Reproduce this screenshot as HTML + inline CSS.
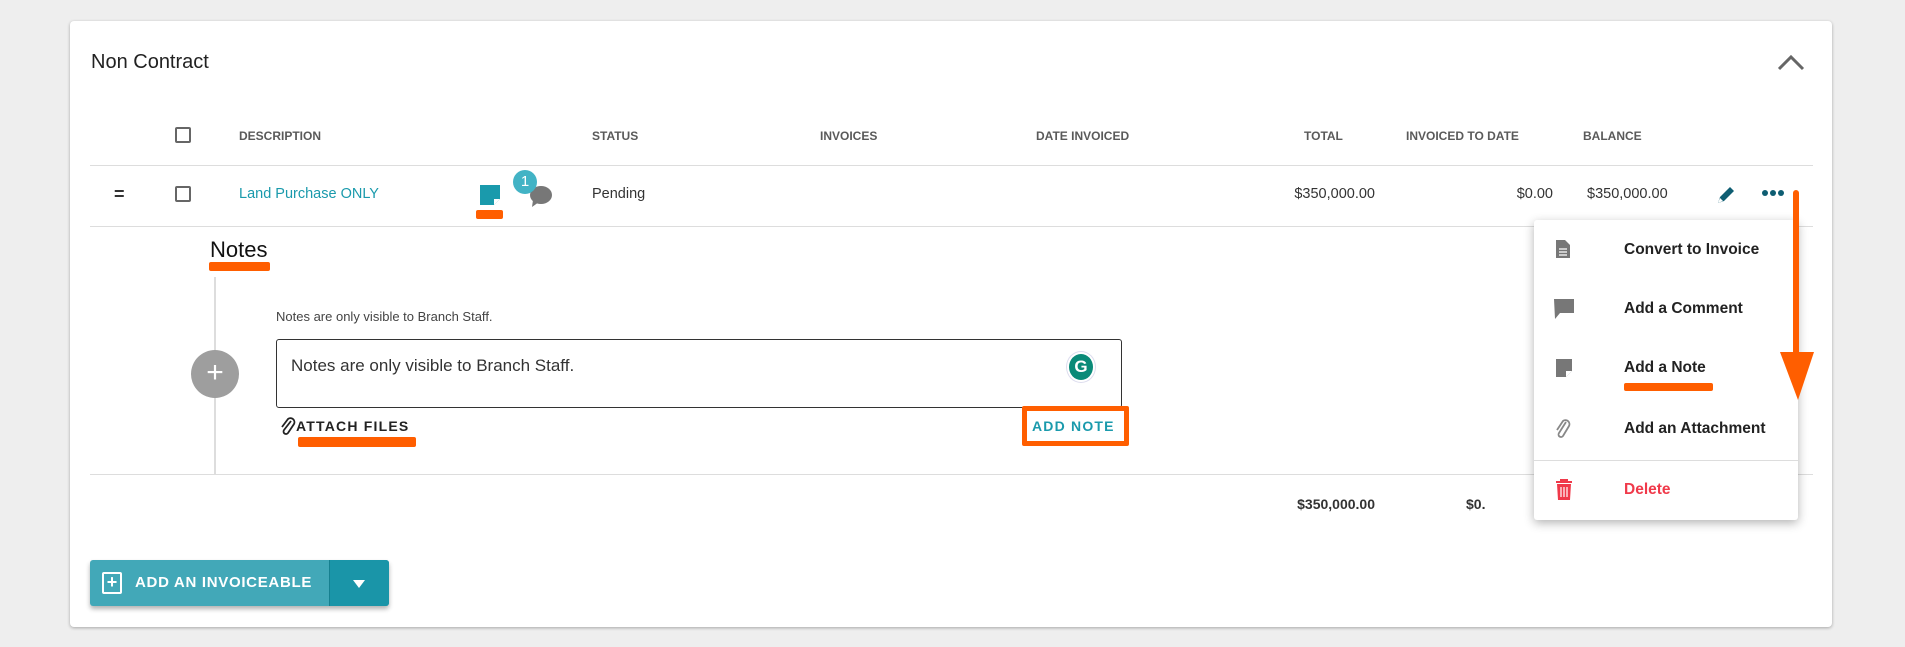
<!DOCTYPE html>
<html><head><style>
*{box-sizing:border-box;margin:0;padding:0}
body{width:1905px;height:647px;background:#eeeeee;font-family:"Liberation Sans",sans-serif;position:relative;overflow:hidden;color:#333}
.a{position:absolute;white-space:nowrap}
.card{position:absolute;left:70px;top:21px;width:1762px;height:606px;background:#fff;border-radius:4px;box-shadow:0 1px 3px rgba(0,0,0,.3)}
.hd{font-size:12px;color:#5a5a5a;font-weight:bold;letter-spacing:0}
.cb{width:16px;height:16px;border:2px solid #666;border-radius:2px}
.line{position:absolute;height:1px;background:#ddd}
.or{position:absolute;background:#ff5e00;border-radius:2px}
.mi{font-size:15.5px;font-weight:bold;color:#222}
</style></head><body>
<div class="card"></div>
<div class="a" style="left:91px;top:51px;font-size:20px;color:#222">Non Contract</div>
<svg class="a" style="left:1777px;top:53px" width="28" height="18" viewBox="0 0 28 18"><path d="M2 16 L14 4 L26 16" stroke="#666" stroke-width="3" fill="none"/></svg>

<div class="a cb" style="left:175px;top:127px"></div>
<div class="a hd" style="left:239px;top:129px">DESCRIPTION</div>
<div class="a hd" style="left:592px;top:129px">STATUS</div>
<div class="a hd" style="left:820px;top:129px">INVOICES</div>
<div class="a hd" style="left:1036px;top:129px">DATE INVOICED</div>
<div class="a hd" style="left:1304px;top:129px">TOTAL</div>
<div class="a hd" style="left:1406px;top:129px">INVOICED TO DATE</div>
<div class="a hd" style="left:1583px;top:129px">BALANCE</div>
<div class="line" style="left:90px;top:165px;width:1723px"></div>

<div class="a" style="left:114px;top:184px;font-size:18px;font-weight:bold;color:#333">=</div>
<div class="a cb" style="left:175px;top:186px"></div>
<div class="a" style="left:239px;top:186px;font-size:14.5px;color:#1a9aac">Land Purchase ONLY</div>
<svg class="a" style="left:479px;top:184px" width="22" height="22" viewBox="0 0 22 22"><path d="M1 1h20v14l-6 6H1z" fill="#1a9aac"/><path d="M15 21v-6h6" fill="#fff"/></svg>
<div class="or" style="left:476px;top:210px;width:27px;height:9px"></div>
<svg class="a" style="left:524px;top:182px" width="30" height="26" viewBox="0 0 30 26"><ellipse cx="17" cy="13" rx="11" ry="9" fill="#777"/><path d="M9 18 L8 25 L15 20z" fill="#777"/></svg>
<div class="a" style="left:513px;top:170px;width:24px;height:24px;border-radius:50%;background:#42b3c5;color:#fff;font-size:15px;text-align:center;line-height:24px">1</div>
<div class="a" style="left:592px;top:186px;font-size:14.5px;color:#333">Pending</div>
<div class="a" style="left:1275px;top:186px;width:100px;text-align:right;font-size:14.5px">$350,000.00</div>
<div class="a" style="left:1493px;top:186px;width:60px;text-align:right;font-size:14.5px">$0.00</div>
<div class="a" style="left:1587px;top:186px;font-size:14.5px">$350,000.00</div>
<svg class="a" style="left:1715px;top:184px" width="22" height="22" viewBox="0 0 22 22"><path d="M3 19 L5 13 L15 3 L19 7 L9 17z" fill="#0e5d72"/><path d="M3 19 L5 14 L8 17z" fill="#fff"/></svg>
<div class="a" style="left:1762px;top:190px;font-size:0">
<span style="display:inline-block;width:6px;height:6px;border-radius:50%;background:#0e5d72;margin-right:2px"></span><span style="display:inline-block;width:6px;height:6px;border-radius:50%;background:#0e5d72;margin-right:2px"></span><span style="display:inline-block;width:6px;height:6px;border-radius:50%;background:#0e5d72"></span></div>
<div class="line" style="left:90px;top:226px;width:1723px"></div>

<div class="a" style="left:210px;top:237px;font-size:22px;color:#111">Notes</div>
<div class="or" style="left:209px;top:262px;width:61px;height:9px"></div>
<div class="a" style="left:214px;top:277px;width:2px;height:197px;background:#ddd"></div>
<div class="a" style="left:191px;top:350px;width:48px;height:48px;border-radius:50%;background:#9e9e9e;color:#fff;font-size:30px;text-align:center;line-height:46px">+</div>
<div class="a" style="left:276px;top:309px;font-size:13px;color:#444">Notes are only visible to Branch Staff.</div>
<div class="a" style="left:276px;top:339px;width:846px;height:69px;border:1px solid #333;border-radius:3px"></div>
<div class="a" style="left:291px;top:356px;font-size:17px;color:#333">Notes are only visible to Branch Staff.</div>
<div class="a" style="left:1066px;top:351px;width:30px;height:32px;border-radius:50%;background:#fff;border:1px solid #dde"></div>
<div class="a" style="left:1069px;top:354px;width:24px;height:26px;border-radius:50%;background:#0a8a78;color:#fff;font-size:17px;font-weight:bold;text-align:center;line-height:26px">G</div>
<svg class="a" style="left:280px;top:416px" width="16" height="20" viewBox="0 0 16 20"><path d="M11 5 L4 14 a2.5 2.5 0 0 0 4 3 L14 8 a4 4 0 0 0 -6 -5 L2 11" stroke="#222" stroke-width="1.8" fill="none"/></svg>
<div class="a" style="left:296px;top:418px;font-size:14px;font-weight:bold;letter-spacing:1.2px;color:#222">ATTACH FILES</div>
<div class="or" style="left:298px;top:437px;width:118px;height:10px"></div>
<div class="a" style="left:1022px;top:406px;width:107px;height:40px;border:5px solid #ff5e00;border-radius:2px"></div>
<div class="a" style="left:1032px;top:418px;font-size:14px;font-weight:bold;letter-spacing:1.2px;color:#1a9aac">ADD NOTE</div>
<div class="line" style="left:90px;top:474px;width:1723px"></div>

<div class="a" style="left:1255px;top:496px;width:120px;text-align:right;font-size:14px;font-weight:bold">$350,000.00</div>
<div class="a" style="left:1466px;top:496px;font-size:14px;font-weight:bold">$0.</div>

<div class="a" style="left:90px;top:560px;width:299px;height:46px;border-radius:3px;background:#42a8b8;box-shadow:0 3px 5px rgba(0,0,0,.3);overflow:hidden">
<div style="position:absolute;left:239px;top:0;width:60px;height:46px;background:#1a95a8;border-left:1px solid #168090"></div>
<div style="position:absolute;left:12px;top:12px;width:20px;height:22px;border:2px solid #fff;border-radius:2px;color:#fff;font-size:18px;line-height:17px;text-align:center;font-weight:bold">+</div>
<div style="position:absolute;left:45px;top:14px;color:#fff;font-size:15px;font-weight:bold;letter-spacing:0.7px">ADD AN INVOICEABLE</div>
<svg style="position:absolute;left:262px;top:19px" width="14" height="10" viewBox="0 0 14 10"><path d="M1 1h12L7 9z" fill="#fff"/></svg>
</div>

<div class="a" style="left:1534px;top:220px;width:264px;height:300px;background:#fff;border-radius:3px;box-shadow:0 3px 10px rgba(0,0,0,.3)"></div>
<svg class="a" style="left:1555px;top:239px" width="16" height="20" viewBox="0 0 16 20"><path d="M1 1h9l5 5v13H1z" fill="#777"/><path d="M4 10h8M4 13h8M4 16h8" stroke="#fff" stroke-width="1.3"/></svg>
<div class="a mi" style="left:1624px;top:241px">Convert to Invoice</div>
<svg class="a" style="left:1553px;top:298px" width="22" height="22" viewBox="0 0 22 22"><path d="M1 1h20v14H7l-5 6z" fill="#777"/></svg>
<div class="a mi" style="left:1624px;top:300px">Add a Comment</div>
<svg class="a" style="left:1555px;top:358px" width="18" height="20" viewBox="0 0 18 20"><path d="M1 1h16v12l-6 6H1z" fill="#777"/><path d="M11 19v-6h6" fill="#fff"/></svg>
<div class="a mi" style="left:1624px;top:359px">Add a Note</div>
<div class="or" style="left:1624px;top:383px;width:89px;height:8px"></div>
<svg class="a" style="left:1555px;top:417px" width="16" height="24" viewBox="0 0 16 24"><path d="M11 5 L4 16 a2.5 2.5 0 0 0 4 3 L14 9 a4 4 0 0 0 -6 -5 L2 13" stroke="#888" stroke-width="1.8" fill="none"/></svg>
<div class="a mi" style="left:1624px;top:420px">Add an Attachment</div>
<div class="line" style="left:1534px;top:460px;width:264px"></div>
<svg class="a" style="left:1555px;top:479px" width="18" height="22" viewBox="0 0 18 22"><path d="M1 3h16M6 3V1h6v2" stroke="#f0394a" stroke-width="2" fill="none"/><path d="M2 5h14l-1 16H3z" fill="#f0394a"/><path d="M6 8v10M9 8v10M12 8v10" stroke="#fff" stroke-width="1.2"/></svg>
<div class="a mi" style="left:1624px;top:481px;color:#f0394a">Delete</div>

<div class="a" style="left:1793px;top:190px;width:6px;height:165px;background:#ff5e00;border-radius:3px"></div>
<svg class="a" style="left:1780px;top:352px" width="34" height="48" viewBox="0 0 34 48"><path d="M0 0h34L18 48z" fill="#ff5e00"/></svg>
</body></html>
